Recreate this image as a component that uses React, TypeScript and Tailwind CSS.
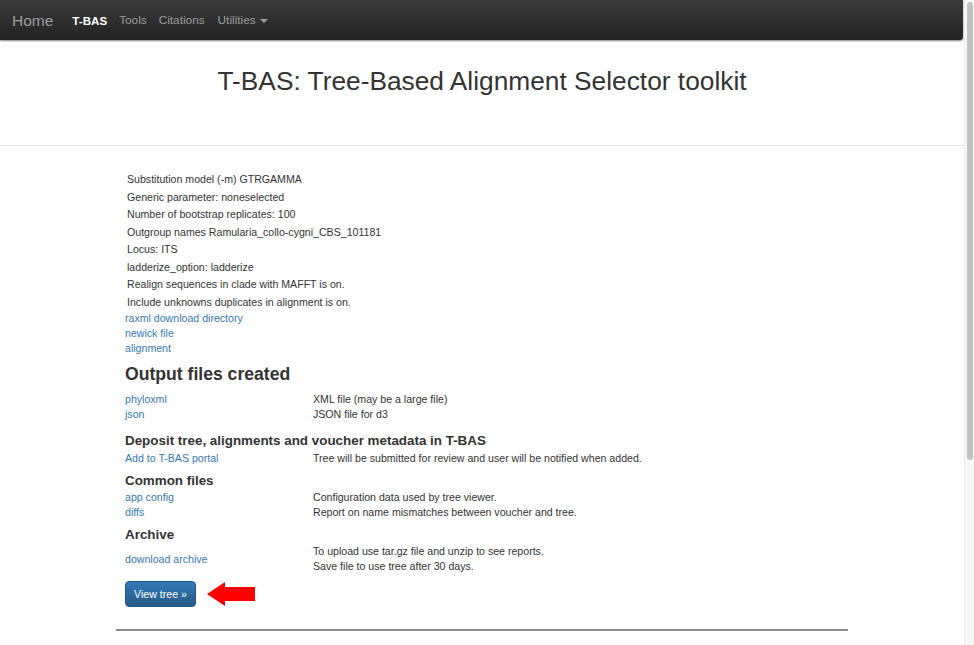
import React from "react";

const params = [
  "Substitution model (-m) GTRGAMMA",
  "Generic parameter: noneselected",
  "Number of bootstrap replicates: 100",
  "Outgroup names Ramularia_collo-cygni_CBS_101181",
  "Locus: ITS",
  "ladderize_option: ladderize",
  "Realign sequences in clade with MAFFT is on.",
  "Include unknowns duplicates in alignment is on.",
];

function Row({ link, children }: { link: string; children: React.ReactNode }) {
  return (
    <div className="flex">
      <a className="w-[188px] shrink-0 text-[#337ab7]">{link}</a>
      <div className="text-[#333]">{children}</div>
    </div>
  );
}

export default function App() {
  return (
    <div
      className="flex h-[645px] w-[974px] overflow-hidden bg-white text-[10.6px] leading-[15px] text-[#333]"
      style={{ fontFamily: '"Liberation Sans", Arial, Helvetica, sans-serif' }}
    >
      <div className="flex w-[964px] flex-col">
        <nav className="flex h-[40px] w-[963px] shrink-0 items-center rounded-br-[3px] bg-gradient-to-b from-[#3c3c3c] to-[#222] shadow-[0_1px_2px_rgba(0,0,0,0.5)]">
          <span className="ml-[12px] text-[15.5px] text-[#9d9d9d]">Home</span>
          <span className="ml-[19px] text-[11.6px] font-bold text-white">T-BAS</span>
          <span className="ml-[12px] text-[11.8px] text-[#9d9d9d]">Tools</span>
          <span className="ml-[12px] text-[11.8px] text-[#9d9d9d]">Citations</span>
          <span className="ml-[13px] flex items-center text-[11.8px] text-[#9d9d9d]">
            Utilities
            <span className="ml-[4px] mt-[1px] h-0 w-0 border-x-[4px] border-t-[4px] border-x-transparent border-t-[#9d9d9d]" />
          </span>
        </nav>

        <div className="flex h-[106px] shrink-0 items-start justify-center border-b border-[#e5e5e5] pt-[25px]">
          <h1 className="text-[26.3px] leading-[32px] text-[#333]">
            T-BAS: Tree-Based Alignment Selector toolkit
          </h1>
        </div>

        <div className="mx-auto flex w-[732px] flex-col pt-[25px]">
          <div className="flex flex-col pl-[11px] leading-[17.5px]">
            {params.map((p) => (
              <div key={p}>{p}</div>
            ))}
          </div>
          <div className="flex flex-col pl-[9px] text-[#337ab7]">
            <a>raxml download directory</a>
            <a>newick file</a>
            <a>alignment</a>
          </div>

          <div className="flex flex-col pl-[9px]">
            <h3 className="mt-[6px] text-[17.6px] font-bold leading-[24px] text-[#333]">
              Output files created
            </h3>
            <div className="mt-[6px]">
              <Row link="phyloxml">XML file (may be a large file)</Row>
              <Row link="json">JSON file for d3</Row>
            </div>

            <h4 className="mt-[10px] text-[13.4px] font-bold leading-[18px] text-[#333]">
              Deposit tree, alignments and voucher metadata in T-BAS
            </h4>
            <div className="mt-[1px]">
              <Row link="Add to T-BAS portal">
                Tree will be submitted for review and user will be notified when added.
              </Row>
            </div>

            <h4 className="mt-[6px] text-[13.4px] font-bold leading-[18px] text-[#333]">Common files</h4>
            <Row link="app config">Configuration data used by tree viewer.</Row>
            <Row link="diffs">Report on name mismatches between voucher and tree.</Row>

            <h4 className="mt-[6px] text-[13.4px] font-bold leading-[18px] text-[#333]">Archive</h4>
            <div className="mt-[0px] flex items-center">
              <a className="w-[188px] shrink-0 text-[#337ab7]">download archive</a>
              <div>
                <div>To upload use tar.gz file and unzip to see reports.</div>
                <div>Save file to use tree after 30 days.</div>
              </div>
            </div>

            <div className="mt-[7px] flex items-center">
              <button className="flex h-[26px] w-[71px] items-center justify-center rounded-[4px] border border-[#245580] bg-gradient-to-b from-[#337ab7] to-[#265a88] text-[10.6px] text-white">
                View tree »
              </button>
              <svg className="ml-[11px]" width="48" height="24" viewBox="0 0 48 24">
                <polygon points="0,12 18,0 18,5 48,5 48,19 18,19 18,24" fill="#ff0000" />
              </svg>
            </div>
          </div>

          <div className="mt-[22px] h-[2px] w-[732px] bg-[#8c8c8c]" />
        </div>
      </div>

      <div className="flex w-[10px] justify-center border-l border-[#ececec] bg-[#f7f7f7] pt-[2px]">
        <div className="h-[458px] w-[6px] rounded-[3px] bg-[#c2c2c2]" />
      </div>
    </div>
  );
}
